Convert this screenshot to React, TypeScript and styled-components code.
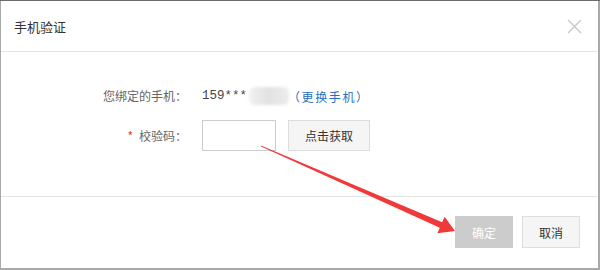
import styled, { createGlobalStyle } from "styled-components";

const GlobalStyle = createGlobalStyle`
  html, body {
    margin: 0;
    padding: 0;
    background: #a9a9a9;
  }
  body {
    font-family: "Noto Sans CJK SC", "Noto Sans", sans-serif;
    font-size: 12px;
    color: #333;
  }
`;

const Page = styled.div`
  position: relative;
  width: 600px;
  height: 270px;
  box-sizing: border-box;
  padding: 0 2px 2px 1px;
  border-top: 1px solid #6a6a6a;
  background: #a9a9a9;
`;

const Dialog = styled.div`
  display: flex;
  flex-direction: column;
  height: 100%;
  background: #fff;
`;

const Header = styled.div`
  display: flex;
  align-items: center;
  justify-content: space-between;
  height: 50px;
  padding: 0 16px 0 13px;
  border-bottom: 1px solid #e5e5e5;
`;

const Title = styled.h3`
  margin: 0;
  font-size: 13px;
  font-weight: 400;
  color: #333;
`;

const Close = styled.button`
  display: flex;
  padding: 0;
  border: none;
  background: none;
  cursor: pointer;
`;

const Body = styled.div`
  display: grid;
  grid-template-columns: 186px auto;
  column-gap: 15px;
  row-gap: 14px;
  align-items: center;
  align-content: start;
  height: 145px;
  padding-top: 34px;
  box-sizing: border-box;
  border-bottom: 1px solid #e5e5e5;
`;

const Label = styled.span`
  text-align: right;
  color: #666;
  line-height: 20px;
`;

const Star = styled.span`
  color: #e4393c;
  margin-right: 6px;
`;

const Value = styled.div<{ $height: number; $gap: number }>`
  display: flex;
  align-items: center;
  gap: ${({ $gap }) => $gap}px;
  height: ${({ $height }) => $height}px;
`;

const Phone = styled.span`
  display: flex;
  align-items: center;
  font-family: "Liberation Mono", monospace;
  font-size: 12.5px;
  color: #444;
`;

const Masked = styled.span`
  display: inline-block;
  width: 40px;
  height: 18px;
  margin-left: 2px;
  background: linear-gradient(90deg, #f0f0f0, #e2e2e2 50%, #ececec);
  border-radius: 6px;
  filter: blur(1.5px);
`;

const Link = styled.a`
  color: #2a6fbd;
  text-decoration: none;
  letter-spacing: 1.6px;
  margin-left: -3px;
  cursor: pointer;
`;

const Input = styled.input`
  width: 74px;
  height: 31px;
  box-sizing: border-box;
  border: 1px solid #ccc;
  outline: none;
  padding: 0 6px;
`;

const Button = styled.button<{ $primary?: boolean; $width: number; $height: number }>`
  width: ${({ $width }) => $width}px;
  height: ${({ $height }) => $height}px;
  box-sizing: border-box;
  border: 1px solid ${({ $primary }) => ($primary ? "#ccc" : "#ddd")};
  background: ${({ $primary }) => ($primary ? "#ccc" : "#f5f5f5")};
  color: ${({ $primary }) => ($primary ? "#fff" : "#333")};
  font-family: inherit;
  font-size: 12px;
  cursor: pointer;
`;

const Footer = styled.div`
  display: flex;
  justify-content: flex-end;
  gap: 9px;
  padding: 19px 18px 0 0;
`;

const Arrow = styled.svg`
  position: absolute;
  left: 0;
  top: 0;
  pointer-events: none;
`;

const App = () => {
  return (
    <>
      <GlobalStyle />
      <Page>
        <Dialog>
          <Header>
            <Title>手机验证</Title>
            <Close>
              <svg width="15" height="15" viewBox="0 0 15 15">
                <path d="M1 1L14 14M14 1L1 14" stroke="#c8c8c8" strokeWidth="1.4" fill="none" />
              </svg>
            </Close>
          </Header>
          <Body>
            <Label>您绑定的手机：</Label>
            <Value $height={20} $gap={2}>
              <Phone>
                159***
                <Masked />
              </Phone>
              <Link>（更换手机）</Link>
            </Value>
            <Label>
              <Star>*</Star>校验码：
            </Label>
            <Value $height={31} $gap={12}>
              <Input />
              <Button $width={82} $height={31}>
                点击获取
              </Button>
            </Value>
          </Body>
          <Footer>
            <Button $primary $width={58} $height={32}>
              确定
            </Button>
            <Button $width={58} $height={32}>
              取消
            </Button>
          </Footer>
        </Dialog>
        <Arrow width="600" height="270" viewBox="0 0 600 270">
          <polygon
            points="261,144.4 442.2,221.2 444.6,215.7 455,230 437.4,232.3 439.8,226.8 261,145.6"
            fill="#f03a3a"
          />
        </Arrow>
      </Page>
    </>
  );
};

export default App;
